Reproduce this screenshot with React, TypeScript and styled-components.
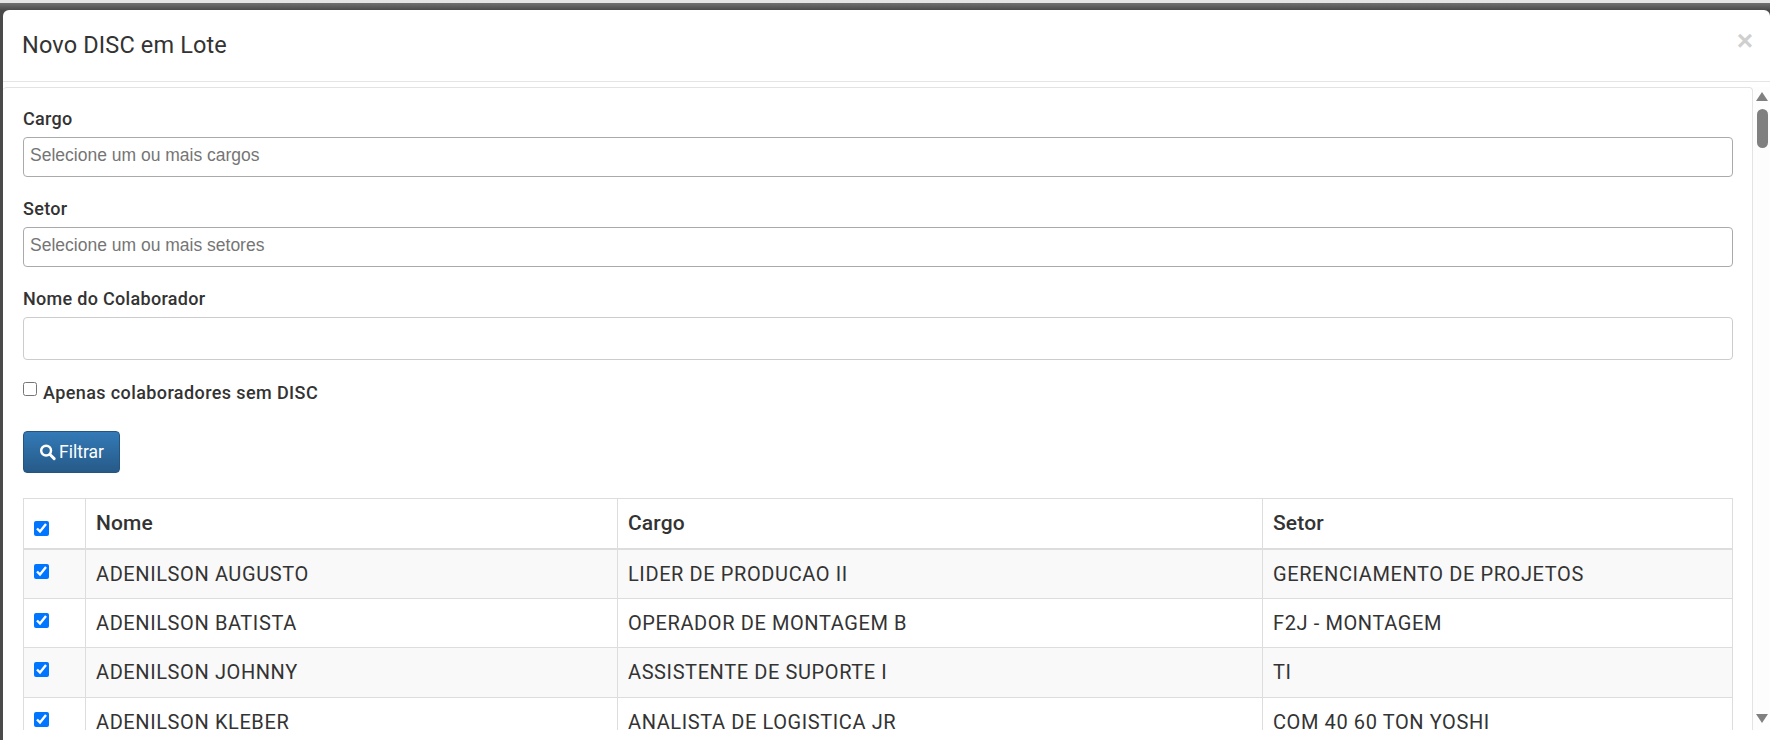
import React from "react";
import styled, { createGlobalStyle } from "styled-components";

const rows = [
  { nome: "ADENILSON AUGUSTO", cargo: "LIDER DE PRODUCAO II", setor: "GERENCIAMENTO DE PROJETOS" },
  { nome: "ADENILSON BATISTA", cargo: "OPERADOR DE MONTAGEM B", setor: "F2J - MONTAGEM" },
  { nome: "ADENILSON JOHNNY", cargo: "ASSISTENTE DE SUPORTE I", setor: "TI" },
  { nome: "ADENILSON KLEBER", cargo: "ANALISTA DE LOGISTICA JR", setor: "COM 40 60 TON YOSHI" },
];

const App = () => {
  return (
    <>
      <GlobalStyle />
      <Backdrop>
        <Modal>
          <ModalHeader>
            <Title>Novo DISC em Lote</Title>
            <Close>×</Close>
          </ModalHeader>
          <ModalBody>
            <Panel>
              <Field>
                <Label>Cargo</Label>
                <Select>Selecione um ou mais cargos</Select>
              </Field>
              <Field>
                <Label>Setor</Label>
                <Select>Selecione um ou mais setores</Select>
              </Field>
              <Field>
                <Label>Nome do Colaborador</Label>
                <TextInput />
              </Field>
              <CheckRow>
                <input type="checkbox" />
                Apenas colaboradores sem DISC
              </CheckRow>
              <FilterButton>
                <svg width="18" height="18" viewBox="0 0 18 18" fill="none">
                  <circle cx="7.5" cy="7.5" r="5.2" stroke="#fff" strokeWidth="2.6" />
                  <path d="M11.6 11.6L16 16" stroke="#fff" strokeWidth="3" strokeLinecap="round" />
                </svg>
                Filtrar
              </FilterButton>
              <Table>
                <colgroup>
                  <col style={{ width: 62 }} />
                  <col style={{ width: 532 }} />
                  <col style={{ width: 645 }} />
                  <col />
                </colgroup>
                <thead>
                  <tr>
                    <CheckTh>
                      <input type="checkbox" defaultChecked />
                    </CheckTh>
                    <Th>Nome</Th>
                    <Th>Cargo</Th>
                    <Th>Setor</Th>
                  </tr>
                </thead>
                <tbody>
                  {rows.map((r) => (
                    <Row key={r.nome}>
                      <CheckTd>
                        <input type="checkbox" defaultChecked />
                      </CheckTd>
                      <Td>{r.nome}</Td>
                      <Td>{r.cargo}</Td>
                      <Td>{r.setor}</Td>
                    </Row>
                  ))}
                </tbody>
              </Table>
            </Panel>
            <Scrollbar>
              <ArrowUp />
              <Thumb />
              <ArrowDown />
            </Scrollbar>
          </ModalBody>
        </Modal>
      </Backdrop>
    </>
  );
};

const GlobalStyle = createGlobalStyle`
  html, body {
    margin: 0;
    height: 740px;
    overflow: hidden;
    font-family: Roboto, "Liberation Sans", sans-serif;
  }
  * { box-sizing: border-box; }
  input[type="checkbox"] {
    width: 14px;
    height: 14px;
    margin: 0;
    accent-color: #0075ff;
  }
`;

const Backdrop = styled.div`
  height: 740px;
  background: linear-gradient(#e4e4e4 0 3px, #707070 3px, #4a4a4a 10px);
  padding: 10px 0 0 3px;
`;

const Modal = styled.div`
  height: 730px;
  background: #fff;
  border-radius: 6px 6px 0 0;
  display: flex;
  flex-direction: column;
`;

const ModalHeader = styled.div`
  height: 72px;
  border-bottom: 1px solid #e5e5e5;
  padding: 0 17px 0 19px;
  display: flex;
  align-items: center;
  justify-content: space-between;
`;

const Title = styled.h4`
  margin: 0 0 2px;
  font-size: 23.5px;
  font-weight: 400;
  letter-spacing: 0.15px;
  color: #333;
`;

const Close = styled.span`
  font-family: "Liberation Sans", sans-serif;
  font-size: 28px;
  font-weight: 700;
  color: #cfcfcf;
  margin: -9px 0 0;
`;

const ModalBody = styled.div`
  height: 648px;
  padding-top: 5px;
  display: flex;
  overflow: hidden;
`;

const Panel = styled.div`
  width: 1750px;
  height: 643px;
  overflow: hidden;
  border: 1px solid #e3e3e3;
  border-bottom: 0;
  border-left: 0;
  border-radius: 4px 4px 0 0;
  padding: 19px 19px 0 20px;
`;

const Field = styled.div`
  margin-bottom: 20px;
`;

const Label = styled.div`
  font-size: 18px;
  font-weight: 500;
  line-height: 24px;
  letter-spacing: 0.3px;
  color: #333;
  margin-bottom: 6px;
`;

const Select = styled.div`
  height: 40px;
  border: 1px solid #aaa;
  border-radius: 4px;
  padding: 0 6px 3px;
  display: flex;
  align-items: center;
  font-family: "Liberation Sans", sans-serif;
  font-size: 17.5px;
  color: #757575;
`;

const TextInput = styled.div`
  height: 43px;
  border: 1px solid #ccc;
  border-radius: 4px;
`;

const CheckRow = styled.label`
  display: flex;
  align-items: center;
  gap: 6px;
  height: 22px;
  padding-top: 2px;
  font-size: 18px;
  font-weight: 500;
  letter-spacing: 0.4px;
  color: #333;

  input {
    margin-top: -6px;
  }
`;

const FilterButton = styled.button`
  display: flex;
  align-items: center;
  gap: 3px;
  width: 97px;
  height: 42px;
  margin: 29px 0 25px;
  padding: 0 15px;
  border: 1px solid #245580;
  border-radius: 4px;
  background: linear-gradient(#337ab7, #265a88);
  color: #fff;
  font-family: Roboto, sans-serif;
  font-size: 17.5px;
  white-space: nowrap;
`;

const Table = styled.table`
  width: 1710px;
  table-layout: fixed;
  border-collapse: collapse;
  color: #333;

  input[type="checkbox"] {
    width: 15px;
    height: 15px;
  }
`;

const Th = styled.th`
  height: 50px;
  padding: 0 10px;
  border: 1px solid #ddd;
  border-bottom: 2px solid #ddd;
  text-align: left;
  font-size: 21px;
  font-weight: 500;
  letter-spacing: 0.15px;
`;

const CheckTh = styled(Th)`
  line-height: 0;
  padding: 10px 0 0 10px;
`;

const Row = styled.tr`
  &:nth-child(odd) {
    background: #f9f9f9;
  }
`;

const Td = styled.td`
  height: 49.6px;
  padding: 0 10px;
  border: 1px solid #ddd;
  font-size: 20px;
  letter-spacing: 0.6px;
  color: #333;
`;

const CheckTd = styled(Td)`
  line-height: 0;
  padding-bottom: 5px;
`;

const Scrollbar = styled.div`
  flex: 1;
  position: relative;
  background: #fdfdfd;
`;

const ArrowUp = styled.div`
  position: absolute;
  top: 5px;
  left: 3px;
  border-left: 6.5px solid transparent;
  border-right: 6.5px solid transparent;
  border-bottom: 9px solid #808080;
`;

const ArrowDown = styled(ArrowUp)`
  top: auto;
  bottom: 7px;
  border-bottom: 0;
  border-top: 9px solid #808080;
`;

const Thumb = styled.div`
  position: absolute;
  top: 22px;
  left: 4px;
  width: 11px;
  height: 39px;
  border-radius: 6px;
  background: #808080;
`;

export default App;
